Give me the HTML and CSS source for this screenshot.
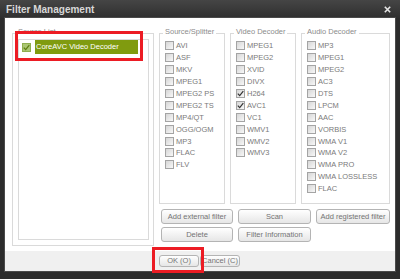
FILE: index.html
```html
<!DOCTYPE html>
<html>
<head>
<meta charset="utf-8">
<link rel="stylesheet" href="styles.css">
</head>
<body>
<div class="window">
  <div class="titlebar">
    <span class="title">Filter Management</span>
    <svg class="close" width="7" height="7" viewBox="0 0 7 7"><path d="M0.8 0.8 L6.2 6.2 M6.2 0.8 L0.8 6.2" stroke="#e6e6e6" stroke-width="1.6"/></svg>
  </div>
  <div class="client">
    <div class="main">
      <div class="group source-list">
        <span class="legend">Source List</span>
        <div class="listbox">
          <div class="list-row">
            <span class="cb cb-green"><svg width="7" height="7" viewBox="0 0 7 7"><path d="M0.8 3.6 L2.7 5.6 L6.3 1.2" fill="none" stroke="#5d7d12" stroke-width="1.3"/></svg></span>
            <span class="sel">CoreAVC Video Decoder</span>
          </div>
        </div>
      </div>
      <div class="right">
        <div class="groups">
          <div class="group g-src">
            <span class="legend">Source/Splitter</span>
            <div class="list">
              <div class="item"><span class="cb"></span>AVI</div>
              <div class="item"><span class="cb"></span>ASF</div>
              <div class="item"><span class="cb"></span>MKV</div>
              <div class="item"><span class="cb"></span>MPEG1</div>
              <div class="item"><span class="cb"></span>MPEG2 PS</div>
              <div class="item"><span class="cb"></span>MPEG2 TS</div>
              <div class="item"><span class="cb"></span>MP4/QT</div>
              <div class="item"><span class="cb"></span>OGG/OGM</div>
              <div class="item"><span class="cb"></span>MP3</div>
              <div class="item"><span class="cb"></span>FLAC</div>
              <div class="item"><span class="cb"></span>FLV</div>
            </div>
          </div>
          <div class="group g-vid">
            <span class="legend">Video Decoder</span>
            <div class="list">
              <div class="item"><span class="cb"></span>MPEG1</div>
              <div class="item"><span class="cb"></span>MPEG2</div>
              <div class="item"><span class="cb"></span>XVID</div>
              <div class="item"><span class="cb"></span>DIVX</div>
              <div class="item"><span class="cb"><svg width="7" height="7" viewBox="0 0 7 7"><path d="M0.8 3.6 L2.7 5.6 L6.3 1.2" fill="none" stroke="#333" stroke-width="1.2"/></svg></span>H264</div>
              <div class="item"><span class="cb"><svg width="7" height="7" viewBox="0 0 7 7"><path d="M0.8 3.6 L2.7 5.6 L6.3 1.2" fill="none" stroke="#333" stroke-width="1.2"/></svg></span>AVC1</div>
              <div class="item"><span class="cb"></span>VC1</div>
              <div class="item"><span class="cb"></span>WMV1</div>
              <div class="item"><span class="cb"></span>WMV2</div>
              <div class="item"><span class="cb"></span>WMV3</div>
            </div>
          </div>
          <div class="group g-aud">
            <span class="legend">Audio Decoder</span>
            <div class="list">
              <div class="item"><span class="cb"></span>MP3</div>
              <div class="item"><span class="cb"></span>MPEG1</div>
              <div class="item"><span class="cb"></span>MPEG2</div>
              <div class="item"><span class="cb"></span>AC3</div>
              <div class="item"><span class="cb"></span>DTS</div>
              <div class="item"><span class="cb"></span>LPCM</div>
              <div class="item"><span class="cb"></span>AAC</div>
              <div class="item"><span class="cb"></span>VORBIS</div>
              <div class="item"><span class="cb"></span>WMA V1</div>
              <div class="item"><span class="cb"></span>WMA V2</div>
              <div class="item"><span class="cb"></span>WMA PRO</div>
              <div class="item"><span class="cb"></span>WMA LOSSLESS</div>
              <div class="item"><span class="cb"></span>FLAC</div>
            </div>
          </div>
        </div>
        <div class="buttons">
          <button class="btn">Add external filter</button>
          <button class="btn">Scan</button>
          <button class="btn">Add registered filter</button>
          <button class="btn">Delete</button>
          <button class="btn">Filter Information</button>
        </div>
      </div>
    </div>
    <div class="footer">
      <button class="btn btn-foot">OK (O)</button>
      <button class="btn btn-foot">Cancel (C)</button>
    </div>
  </div>
  <div class="mark mark-list"></div>
  <div class="mark mark-ok"></div>
</div>
</body>
</html>
```
FILE: styles.css
```css
* { box-sizing: border-box; }
html, body { margin: 0; padding: 0; }
body {
  width: 400px;
  height: 279px;
  overflow: hidden;
  background: #2c2c2c;
  font-family: "Liberation Sans", Arial, sans-serif;
}
.window {
  position: relative;
  width: 400px;
  height: 279px;
  background: #2c2c2c;
  padding: 0 5px 8px 5px;
  display: flex;
  flex-direction: column;
}
.titlebar {
  height: 18px;
  margin: 0 -5px;
  padding: 1px 9px 0 6px;
  display: flex;
  align-items: center;
  justify-content: space-between;
  background: linear-gradient(#454545, #2f2f2f);
}
.title {
  color: #d8d8d8;
  font-weight: bold;
  font-size: 10px;
  line-height: 12px;
}
.close { display: block; margin-top: -1px; }
.client {
  height: 253px;
  background: #ffffff;
  display: flex;
  flex-direction: column;
  box-shadow: 0 0 0 1px #4a4a4a;
}
.main {
  height: 233px;
  display: flex;
  gap: 5px;
  padding: 15px 0 0 7px;
}
.group {
  position: relative;
  border: 1px solid #dadada;
}
.legend {
  position: absolute;
  top: -7px;
  left: 3px;
  padding: 0 2px;
  background: #fff;
  color: #8c8c8c;
  font-size: 7.5px;
  line-height: 9px;
  white-space: nowrap;
}
.source-list {
  width: 142px;
  height: 213px;
  padding: 5px 4px 5px 5px;
}
.listbox {
  height: 201px;
  border: 1px solid #dadada;
  padding: 0 0 0 3px;
}
.list-row {
  height: 14px;
  display: flex;
  align-items: center;
  gap: 4px;
}
.sel {
  width: 103px;
  height: 14px;
  background: #809b0f;
  color: #fff;
  font-size: 7.5px;
  line-height: 14px;
  padding-left: 1px;
  white-space: nowrap;
}
.right {
  width: 231px;
  display: flex;
  flex-direction: column;
}
.groups {
  display: flex;
  gap: 5px;
  height: 171px;
}
.g-src, .g-vid { width: 66px; }
.g-aud { width: 89px; }
.groups .group { padding: 6px 0 0 5px; }
.list {
  display: flex;
  flex-direction: column;
}
.item {
  height: 11.9px;
  display: flex;
  align-items: center;
  gap: 2px;
  color: #7a7a7a;
  font-size: 7.5px;
  white-space: nowrap;
}
.cb {
  flex: none;
  width: 9px;
  height: 9px;
  border: 1px solid #a4a4a4;
  background: linear-gradient(135deg, #d6d6d6, #f8f8f8);
  display: flex;
  align-items: center;
  justify-content: center;
}
.cb svg { display: block; }
.cb-green {
  border-color: #8fae4f;
  background: #abc673;
}
.buttons {
  margin-top: 5px;
  margin-left: 2px;
  display: grid;
  grid-template-columns: 72px 73px 74px;
  column-gap: 5px;
  row-gap: 3px;
}
.btn {
  margin: 0;
  height: 15px;
  padding: 0;
  border: 1px solid #b4b4b4;
  border-radius: 3px;
  background: linear-gradient(#ffffff, #e6e6e6);
  color: #747474;
  font-family: "Liberation Sans", Arial, sans-serif;
  font-size: 7.5px;
  line-height: 13px;
  white-space: nowrap;
  text-align: center;
}
.footer {
  height: 20px;
  background: #f0f0f0;
  display: flex;
  gap: 1px;
  padding: 4px 0 0 154px;
}
.btn-foot {
  width: 40px;
  height: 12px;
  line-height: 10px;
}
.mark {
  position: absolute;
  border: 3px solid #ec1c24;
}
.mark-list { left: 15px; top: 31px; width: 128px; height: 30px; }
.mark-ok { left: 152px; top: 247px; width: 52px; height: 26px; }
```
